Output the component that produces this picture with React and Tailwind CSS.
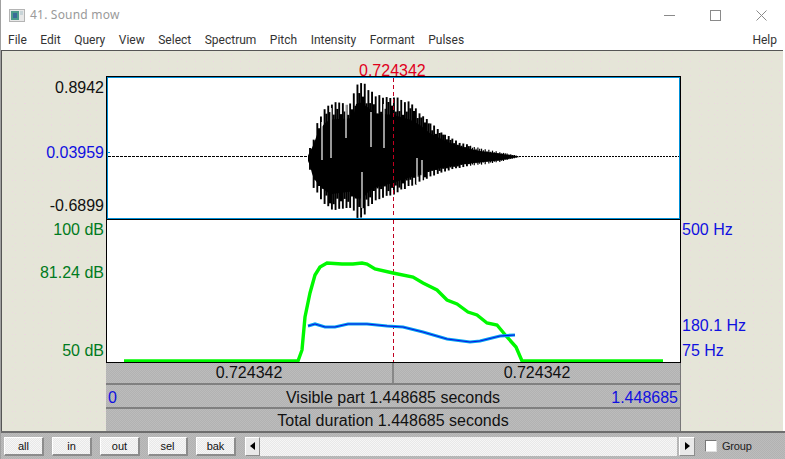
import React from 'react';

const MENUS = ['File', 'Edit', 'Query', 'View', 'Select', 'Spectrum', 'Pitch', 'Intensity', 'Formant', 'Pulses'];
const ZOOMS = ['all', 'in', 'out', 'sel', 'bak'];

const CENTER = 157;
const UPPER = [[308, 155], [310, 148], [313, 141], [318, 120], [325, 107], [330, 102], [350, 100], [354, 92], [356, 79], [360, 77], [367, 83], [375, 93], [393, 95], [410, 102], [420, 110], [430, 122], [445, 133], [460, 142], [480, 148], [500, 152], [515, 155], [520, 157]];
const LOWER = [[308, 163], [310, 170], [313, 187], [320, 200], [330, 212], [350, 208], [356, 218], [363, 218], [368, 209], [375, 202], [393, 195], [410, 187], [420, 183], [430, 177], [445, 172], [460, 168], [480, 165], [500, 162], [515, 158], [520, 157]];
const INTENSITY = [[124, 361], [298, 361], [302, 350], [305, 317], [310, 293], [315, 275], [320, 267], [327, 263], [342, 264], [353, 264], [362, 263], [367, 264], [375, 269], [393, 273], [413, 277], [423, 283], [437, 290], [447, 300], [457, 304], [468, 312], [477, 315], [487, 323], [497, 325], [507, 337], [516, 347], [522, 361], [663, 361]];
const PITCH = [[308, 326], [315, 324], [325, 327], [335, 327], [348, 324], [367, 324], [387, 326], [403, 327], [423, 332], [447, 339], [470, 342], [480, 341], [492, 338], [500, 336], [515, 335]];
// gaps that show through the dark body of the wave
const GAPS = [[322, 122, 160], [331, 108, 158], [346, 104, 138], [362, 172, 208], [371, 112, 147], [384, 104, 148], [417, 158, 184], [422, 160, 182]];

function interp(points, x) {
  for (let i = 1; i < points.length; i++) {
    if (x <= points[i][0]) {
      const [x0, y0] = points[i - 1];
      const [x1, y1] = points[i];
      return y0 + ((y1 - y0) * (x - x0)) / (x1 - x0);
    }
  }
  return points[points.length - 1][1];
}

const toPoints = (pts) => pts.map((p) => p.join(',')).join(' ');

const jitter = (i) => {
  const v = Math.sin(i * 12.9898) * 43758.5453;
  return v - Math.floor(v);
};

function bodyOutline() {
  const top = [];
  const bottom = [];
  for (let x = 308; x <= 520; x += 2) {
    top.push([x, CENTER - (CENTER - interp(UPPER, x)) * 0.68]);
    bottom.push([x, CENTER + (interp(LOWER, x) - CENTER) * 0.68]);
  }
  return toPoints([...top, ...bottom.reverse()]);
}

function Waveform() {
  const spikes = [];
  for (let x = 310, i = 0; x < 518; x += 3.65, i++) {
    const up = interp(UPPER, x);
    const low = interp(LOWER, x);
    const y1 = up + (CENTER - up) * 0.08 * jitter(i);
    const y2 = low - (low - CENTER) * 0.08 * jitter(i + 50);
    const inUp = CENTER - (CENTER - up) * (0.68 + 0.2 * jitter(i + 9));
    const inLow = CENTER + (low - CENTER) * (0.68 + 0.2 * jitter(i + 31));
    spikes.push(
      <g key={i}>
        <line x1={x} x2={x} y1={y1} y2={y2} stroke="#000" strokeWidth={x > 470 ? 1.2 : 1.9} />
        <line x1={x + 1.8} x2={x + 1.8} y1={inUp} y2={inLow} stroke="#000" strokeWidth={x > 470 ? 1.2 : 2.2} />
      </g>
    );
  }
  return (
    <svg viewBox="108 78 571 140" className="block w-[571px] h-[140px]">
      <line x1="108" x2="310" y1="156.5" y2="156.5" stroke="#000" strokeDasharray="3 1" />
      <line x1="516" x2="679" y1="156.5" y2="156.5" stroke="#000" strokeDasharray="2 1" />
      <polygon points={bodyOutline()} fill="#000" />
      {spikes}
      {GAPS.map(([x, y1, y2]) => (
        <line key={x} x1={x} x2={x} y1={y1} y2={y2} stroke="#fff" strokeWidth="1.2" />
      ))}
      <line x1="108" x2="110" y1="152.5" y2="152.5" stroke="#0090d8" />
      <line x1="393.5" x2="393.5" y1="78" y2="218" stroke="#c00020" strokeDasharray="4 3" />
    </svg>
  );
}

function Curves() {
  return (
    <svg viewBox="108 220 571 142" className="block w-[571px] h-[142px]">
      <line x1="393.5" x2="393.5" y1="220" y2="362" stroke="#c00020" strokeDasharray="4 3" />
      <polyline points={toPoints(INTENSITY)} fill="none" stroke="#00f800" strokeWidth="3.4" />
      <polyline points={toPoints(PITCH)} fill="none" stroke="#00a4f0" strokeWidth="3.2" />
      <polyline points={toPoints(PITCH)} fill="none" stroke="#1010e0" strokeWidth="1" />
    </svg>
  );
}

function WindowIcon() {
  return (
    <svg width="16" height="13" viewBox="0 0 16 13" className="shrink-0">
      <rect x="0.5" y="0.5" width="15" height="12" fill="#e8e8e8" stroke="#b4b4b4" />
      <rect x="2" y="2" width="8" height="9" fill="#4a9a8a" />
      <rect x="4" y="4" width="4" height="5" fill="#3a6a9a" />
      <rect x="11" y="2" width="3" height="4" fill="#c8d4d8" />
    </svg>
  );
}

function Scroller({ className, children }) {
  return (
    <div className={`h-[19px] flex items-center justify-center border-l border-t border-white border-r border-b border-r-[#8c8c8c] border-b-[#8c8c8c] bg-[#e9e9e9] ${className}`}>
      {children}
    </div>
  );
}

const BEIGE = 'bg-[#e5e5d8] bg-[image:radial-gradient(#ecd9e0_0.6px,transparent_0.9px),radial-gradient(#ecd9e0_0.5px,transparent_0.8px)] bg-[length:9px_7px,13px_11px] bg-[position:0_0,4px_3px]';
const GRAY = 'bg-[image:repeating-conic-gradient(#bcbcbc_0_25%,#b2b2b2_0_50%)] bg-[length:2px_2px]';
const LIGHT = 'bg-[image:repeating-conic-gradient(#f6f6f6_0_25%,#e8e8e8_0_50%)] bg-[length:2px_2px]';

function Label({ className, children }) {
  return <div className={`h-[18px] leading-[18px] text-[16px] whitespace-nowrap ${className}`}>{children}</div>;
}

export default function App() {
  return (
    <div className="w-[785px] h-[459px] flex flex-col bg-white overflow-hidden border-l border-[#a0a0a0] font-['Liberation_Sans',sans-serif] text-[#111]">
      {/* Title bar */}
      <div className="h-[30px] flex items-center pl-[8px] font-['Noto_Sans',sans-serif] text-[12px] text-[#9a9a9a]">
        <WindowIcon />
        <span className="ml-[5px] tracking-[0.2px]">41. Sound mow</span>
        <div className="ml-auto flex items-center gap-[35px] pr-[18px]">
          <svg width="11" height="11" viewBox="0 0 11 11"><line x1="0" x2="11" y1="5.5" y2="5.5" stroke="#8a8a8a" /></svg>
          <svg width="11" height="11" viewBox="0 0 11 11"><rect x="0.5" y="0.5" width="10" height="10" fill="none" stroke="#8a8a8a" /></svg>
          <svg width="11" height="11" viewBox="0 0 11 11"><path d="M0.5 0.5 L10.5 10.5 M10.5 0.5 L0.5 10.5" stroke="#8a8a8a" fill="none" /></svg>
        </div>
      </div>

      {/* Menu bar */}
      <div className="h-[20px] flex items-center gap-[13.5px] pl-[7px] pr-[8px] font-['Roboto',sans-serif] text-[12px] text-[#333]">
        {MENUS.map((m) => <span key={m}>{m}</span>)}
        <span className="ml-auto">Help</span>
      </div>

      {/* Editor */}
      <div className={`h-[381px] mr-[2px] flex border-t border-l border-[#555] ${BEIGE}`}>
        <div className="w-[104px] flex flex-col items-end pr-[2px]">
          <Label className="mt-[28px]">0.8942</Label>
          <Label className="mt-[47px] text-[#1010e0]">0.03959</Label>
          <Label className="mt-[35px]">-0.6899</Label>
          <Label className="mt-[6px] text-[#007a20]">100 dB</Label>
          <Label className="mt-[25px] text-[#007a20]">81.24 dB</Label>
          <Label className="mt-[60px] text-[#007a20]">50 dB</Label>
        </div>

        <div className="w-[575px] flex flex-col">
          <div className="h-[25px] pl-[253px] pt-[11px] text-[16px] leading-[18px] text-[#e0001c] whitespace-nowrap">0.724342</div>
          <div className="relative z-10 bg-white border border-black border-b-0">
            <div className="border-t border-l border-r border-[#0090d8]">
              <Waveform />
            </div>
            <div className="border-t border-[#0090d8] border-b border-b-black" />
          </div>
          <div className="bg-white border-l border-r border-b border-black">
            <div className="pl-[1px]"><Curves /></div>
          </div>

          <div className={`flex flex-col flex-1 border-r border-[#777] ${GRAY}`}>
            <div className="h-[22px] flex text-[16px] leading-[20px] border-b-2 border-[#808080]">
              <div className="flex-1 text-center border-r-2 border-[#888]">0.724342</div>
              <div className="flex-1 text-center">0.724342</div>
            </div>
            <div className="h-[24px] flex justify-between px-[2px] text-[16px] leading-[26px] border-b-2 border-[#808080]">
              <span className="w-[80px] text-[#1010e0]">0</span>
              <span>Visible part 1.448685 seconds</span>
              <span className="w-[80px] text-right text-[#1010e0]">1.448685</span>
            </div>
            <div className="flex-1 text-center text-[16px] leading-[24px]">Total duration 1.448685 seconds</div>
          </div>
        </div>

        <div className="flex-1 flex flex-col pl-[1px]">
          <Label className="mt-[170px] text-[#1010e0]">500 Hz</Label>
          <Label className="mt-[78px] text-[#1010e0]">180.1 Hz</Label>
          <Label className="mt-[7px] text-[#1010e0]">75 Hz</Label>
        </div>
      </div>

      {/* Bottom toolbar */}
      <div className={`flex-1 flex items-center border-t-2 border-[#6e6e6e] pl-[3px] ${GRAY}`}>
        <div className="flex gap-[8px]">
          {ZOOMS.map((z) => (
            <button key={z} className={`w-[40px] h-[19px] text-[11px] leading-[16px] text-[#111] border-l border-t border-white border-r-2 border-b-2 border-r-[#8c8c8c] border-b-[#8c8c8c] ${LIGHT}`}>
              {z}
            </button>
          ))}
        </div>
        <div className="ml-[9px] flex items-center">
          <Scroller className="w-[15px]">
            <svg width="5" height="8" viewBox="0 0 5 8"><polygon points="5,0 5,8 0,4" fill="#000" /></svg>
          </Scroller>
          <div className={`w-[417px] h-[19px] ${LIGHT}`} />
          <Scroller className="w-[16px] ml-[2px]">
            <svg width="5" height="8" viewBox="0 0 5 8"><polygon points="0,0 0,8 5,4" fill="#000" /></svg>
          </Scroller>
        </div>
        <div className="ml-[10px] w-[12px] h-[12px] bg-white border border-[#777] border-r-[#e0e0e0] border-b-[#e0e0e0]" />
        <span className="ml-[5px] text-[11px] tracking-[-0.2px] text-[#222]">Group</span>
      </div>
    </div>
  );
}
